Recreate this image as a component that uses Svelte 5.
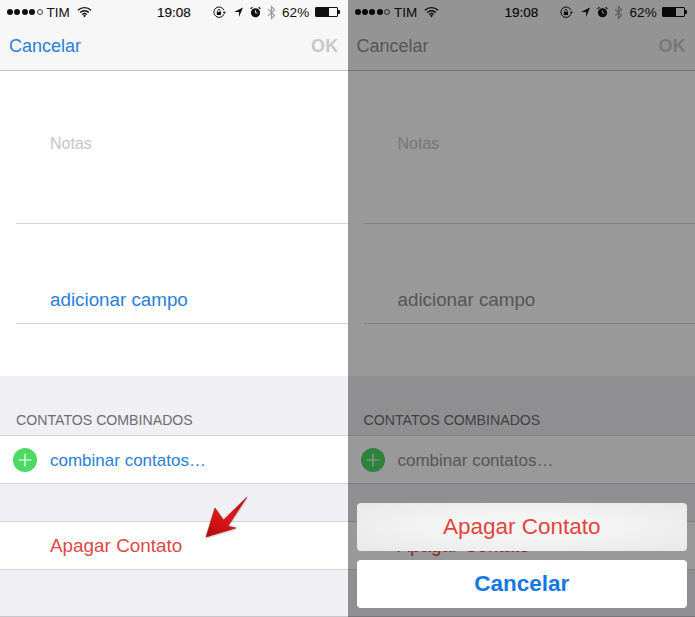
<script>
  const screens = [{ dimmed: false }, { dimmed: true }];
</script>

{#snippet statusBar()}
  <div class="status">
    <div class="status-left">
      <span class="dots"><i></i><i></i><i></i><i></i><i class="off"></i></span>
      <span class="carrier">TIM</span>
      <svg class="wifi" width="15" height="12" viewBox="0 0 16 12">
        <path d="M1 4.2a10 10 0 0 1 14 0M3.4 6.6a6.6 6.6 0 0 1 9.2 0M5.6 8.8a3.4 3.4 0 0 1 4.8 0" fill="none" stroke="#111" stroke-width="1.5" />
        <path d="M8 11.6 6.4 10a2.2 2.2 0 0 1 3.2 0z" fill="#111" />
      </svg>
    </div>
    <span class="clock">19:08</span>
    <div class="status-right">
      <svg width="13" height="13" viewBox="0 0 13 13">
        <path d="M10.9 8.2A5.2 5.2 0 1 1 10.9 4.2" fill="none" stroke="#111" stroke-width="1" />
        <path d="M9.6 5.8H13L11.3 8z" fill="#111" />
        <rect x="3.8" y="5.8" width="4.2" height="3.2" fill="#111" />
        <path d="M4.7 5.8V4.6a1.2 1.2 0 0 1 2.4 0v1.2" fill="none" stroke="#111" stroke-width=".8" />
      </svg>
      <svg class="gap-loc" width="9" height="10" viewBox="0 0 9 10"><path d="M9 .5 5 10V5H0z" fill="#111" /></svg>
      <svg class="gap-alarm" width="11" height="12" viewBox="0 0 12 12">
        <circle cx="6" cy="6.8" r="5" fill="#111" />
        <path d="M6 4v3h2.2" fill="none" stroke="#fff" stroke-width=".9" />
        <path d="M.6 2.6 2.6.8M11.4 2.6 9.4.8" stroke="#111" stroke-width="1.3" />
      </svg>
      <svg class="gap-bt" width="9" height="15" viewBox="0 0 8 14">
        <path d="M.8 3.8 6.8 9.6 4 12.6V1.4l2.8 3L.8 10.2" fill="none" stroke="#9a9a9a" stroke-width="1.1" />
      </svg>
      <span class="battery-pct">62%</span>
      <span class="battery"><span class="battery-fill"></span></span>
      <span class="battery-tip"></span>
    </div>
  </div>
{/snippet}

{#snippet screen(dimmed)}
  <div class="phone" class:dimmed>
    <header class="top">
      {@render statusBar()}
      <nav class="nav">
        <span class="nav-cancel">Cancelar</span>
        <span class="nav-ok">OK</span>
      </nav>
    </header>

    <section class="form">
      <div class="field notes"><span>Notas</span></div>
      <div class="field add"><span class="link">adicionar campo</span></div>
    </section>

    <section class="grouped">
      <h3>CONTATOS COMBINADOS</h3>
      <div class="cell merge">
        <span class="plus">
          <svg width="24" height="24" viewBox="0 0 24 24">
            <circle cx="12" cy="12" r="12" fill="#4cd964" />
            <path d="M12 5.5v13M5.5 12h13" stroke="#fff" stroke-width="1.2" />
          </svg>
        </span>
        <span class="link">combinar contatos…</span>
      </div>
      <div class="cell delete"><span>Apagar Contato</span></div>
    </section>

    {#if dimmed}
      <div class="dim"></div>
      <div class="sheet">
        <div class="sheet-btn sheet-delete">Apagar Contato</div>
        <div class="sheet-btn sheet-cancel">Cancelar</div>
      </div>
    {:else}
      <svg class="arrow" width="46" height="50" viewBox="0 0 46 50">
        <defs>
          <linearGradient id="arrowFill" x1="0.2" y1="1" x2="0.8" y2="0">
            <stop offset="0" stop-color="#b80c0c" />
            <stop offset="0.5" stop-color="#e01818" />
            <stop offset="1" stop-color="#c41010" />
          </linearGradient>
        </defs>
        <path d="M2 42 11 13 19.5 25 43 2 24 31 32 33z" fill="url(#arrowFill)" stroke="#a80a0a" stroke-width=".6" stroke-linejoin="round" />
      </svg>
    {/if}
  </div>
{/snippet}

<div class="shots">
  {#each screens as s}
    {@render screen(s.dimmed)}
  {/each}
</div>

<style>
  :global(body) {
    margin: 0;
    background: #fff;
  }

  .shots {
    display: flex;
    width: 695px;
    height: 617px;
    overflow: hidden;
    font-family: "Liberation Sans", Arial, sans-serif;
    color: #111;
  }

  .phone {
    position: relative;
    flex: 1 0 347.5px;
    height: 617px;
    display: flex;
    flex-direction: column;
    background: #efeff4;
    overflow: hidden;
  }

  .top {
    height: 70px;
    background: #f7f7f8;
    border-bottom: 1px solid #c4c4c6;
    flex: none;
  }

  .status {
    height: 22px;
    padding: 1px 8px 0 7px;
    display: flex;
    align-items: center;
    font-size: 13.5px;
  }

  .status-left {
    width: 150px;
    display: flex;
    align-items: center;
  }

  .dots {
    display: flex;
    gap: 1.4px;
  }

  .dots i {
    width: 6px;
    height: 6px;
    border-radius: 50%;
    background: #111;
    box-sizing: border-box;
  }

  .dots i.off {
    background: none;
    border: 1px solid #444;
  }

  .carrier {
    margin-left: 4px;
  }

  .wifi {
    margin-left: 7px;
  }

  .clock {
    -webkit-text-stroke: 0.2px #111;
  }

  .status-right {
    flex: 1;
    display: flex;
    align-items: center;
    justify-content: flex-end;
  }

  .gap-loc {
    margin-left: 8px;
  }

  .gap-alarm {
    margin-left: 7px;
  }

  .gap-bt {
    margin-left: 6px;
  }

  .battery-pct {
    margin-left: 6px;
    letter-spacing: 0.2px;
  }

  .battery {
    width: 23px;
    height: 10px;
    margin-left: 5px;
    border: 1px solid #111;
    box-sizing: border-box;
    display: block;
    border-radius: 1px;
  }

  .battery-fill {
    display: block;
    width: 62%;
    height: 100%;
    background: #111;
  }

  .battery-tip {
    width: 2px;
    height: 4px;
    background: #111;
    border-radius: 0 1px 1px 0;
  }

  .nav {
    height: 47px;
    padding: 0 9px;
    display: flex;
    justify-content: space-between;
    align-items: center;
    font-size: 18px;
  }

  .nav-cancel {
    color: #2a80d8;
  }

  .dimmed .nav-cancel,
  .dimmed .link {
    color: #909090;
  }

  .nav-ok {
    color: #c8c8c8;
    font-weight: 700;
    letter-spacing: 0.3px;
  }

  .form {
    height: 305px;
    flex: none;
    background: #fff;
    padding-left: 16px;
  }

  .field {
    display: flex;
    align-items: flex-start;
    padding-left: 34px;
    box-sizing: border-box;
    border-bottom: 1px solid #d4d4d6;
    font-size: 16px;
  }

  .notes {
    height: 153px;
    padding-top: 64px;
    color: #c6c6ca;
  }

  .add {
    height: 100px;
    padding-top: 65px;
    font-size: 18.8px;
  }

  .link {
    color: #2a80d8;
  }

  .grouped {
    flex: 1;
    display: flex;
    flex-direction: column;
    border-bottom: 1px solid #c8c8cc;
  }

  .grouped h3 {
    margin: 0;
    height: 60px;
    box-sizing: border-box;
    padding: 36px 0 0 16px;
    font-size: 14.15px;
    line-height: 16px;
    font-weight: 400;
    color: #6d6d72;
    border-bottom: 1px solid #d4d4d6;
  }

  .cell {
    height: 48px;
    box-sizing: border-box;
    background: #fff;
    display: flex;
    align-items: center;
    border-bottom: 1px solid #d4d4d6;
    font-size: 17px;
  }

  .merge {
    padding-left: 13px;
  }

  .merge .link {
    margin-top: 2px;
  }

  .plus {
    width: 24px;
    height: 24px;
    margin-right: 13px;
    display: block;
  }

  .plus svg {
    display: block;
  }

  .delete {
    margin-top: 37px;
    padding-left: 50px;
    color: #dc4a44;
    border-top: 1px solid #d4d4d6;
    height: 49px;
    font-size: 18.9px;
  }

  .arrow {
    position: absolute;
    left: 204px;
    top: 495px;
    filter: drop-shadow(0 1px 1px rgba(0, 0, 0, 0.25));
  }

  .dim {
    position: absolute;
    inset: 0;
    background: rgba(0, 0, 0, 0.4);
  }

  .sheet {
    position: absolute;
    left: 9px;
    right: 8px;
    top: 503px;
    display: flex;
    flex-direction: column;
    gap: 9px;
  }

  .sheet-btn {
    height: 48px;
    border-radius: 4px;
    display: flex;
    align-items: center;
    justify-content: center;
    font-size: 22.5px;
  }

  .sheet-delete {
    background: radial-gradient(ellipse at center, #f6f5f5 30%, #e9e8e8 100%);
    color: #e2453c;
  }

  .sheet-cancel {
    background: #fff;
    color: #1477e2;
    font-weight: 700;
  }
</style>
